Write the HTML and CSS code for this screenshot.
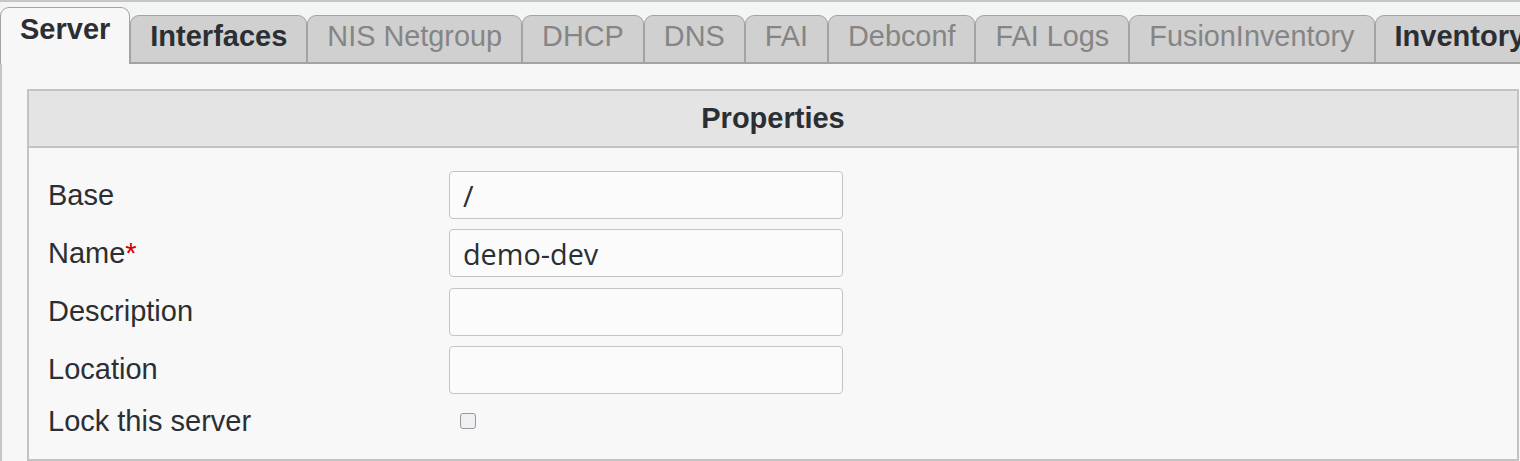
FILE: index.html
```html
<!DOCTYPE html>
<html lang="en">
<head>
<meta charset="utf-8">
<title>Server</title>
<link rel="stylesheet" href="styles.css">
</head>
<body>
<div class="tabbar">
  <div class="tab active">Server</div>
  <div class="tab enabled">Interfaces</div>
  <div class="tab">NIS Netgroup</div>
  <div class="tab">DHCP</div>
  <div class="tab">DNS</div>
  <div class="tab">FAI</div>
  <div class="tab">Debconf</div>
  <div class="tab">FAI Logs</div>
  <div class="tab">FusionInventory</div>
  <div class="tab enabled">Inventory</div>
</div>
<div class="content">
  <div class="panel">
    <div class="panel-head">Properties</div>
    <div class="panel-body">
      <label class="lbl">Base</label>
      <div class="field"><input class="txt" type="text" value="/"></div>
      <label class="lbl">Name<span class="req">*</span></label>
      <div class="field"><input class="txt" type="text" value="demo-dev"></div>
      <label class="lbl">Description</label>
      <div class="field"><input class="txt" type="text" value=""></div>
      <label class="lbl">Location</label>
      <div class="field"><input class="txt" type="text" value=""></div>
      <label class="lbl short">Lock this server</label>
      <div class="field short"><input class="cb" type="checkbox"></div>
    </div>
  </div>
</div>
</body>
</html>
```
FILE: styles.css
```css
html, body {
  margin: 0;
  padding: 0;
  background: #f7f7f7;
  font-family: "Liberation Sans", Arial, sans-serif;
  font-size: 29px;
  color: #2b2f33;
  overflow: hidden;
}

.tabbar {
  display: flex;
  align-items: flex-end;
  border-top: 2px solid #c6c6c6;
  background: #f3f4f4;
  padding-top: 5px;
  white-space: nowrap;
  overflow: hidden;
}

.tab {
  flex-shrink: 0;
  box-sizing: border-box;
  height: 49px;
  padding: 0 19px;
  line-height: 40px;
  font-size: 28.85px;
  border: 1px solid #a3a3a3;
  border-bottom: 2px solid #a3a3a3;
  border-radius: 9px 9px 0 0;
  background: #d0d0d0;
  color: #858585;
}

.tab.enabled {
  font-size: 29px;
  color: #2b2f33;
  font-weight: bold;
}

.tab.active {
  height: 57px;
  padding-top: 1px;
  font-size: 29px;
  border-bottom: none;
  background: #f7f7f7;
  color: #2b2f33;
  font-weight: bold;
}

.content {
  border-left: 2px solid #c6c6c6;
  padding: 25px 1px 0 25px;
  background: #f7f7f7;
}

.panel {
  border: 2px solid #c3c3c3;
  background: #f8f8f8;
}

.panel-head {
  height: 55px;
  line-height: 55px;
  text-align: center;
  font-weight: bold;
  background: #e4e4e4;
  border-bottom: 2px solid #c3c3c3;
}

.panel-body {
  display: grid;
  grid-template-columns: 401px 394px;
  grid-template-rows: 48px 48px 48px 48px 34px;
  row-gap: 10.3px;
  align-items: center;
  padding: 23px 19px 21px 19px;
}

.lbl {
  display: flex;
  align-items: center;
  height: 48px;
  white-space: nowrap;
}

.field {
  display: flex;
  align-items: center;
  height: 48px;
}

.lbl.short,
.field.short {
  height: 34px;
}

.req {
  color: #d20000;
}

.txt {
  box-sizing: border-box;
  width: 394px;
  height: 48px;
  margin: 0;
  padding: 0 13px;
  border: 1px solid #c4c4c4;
  border-radius: 4px;
  background: #fbfbfb;
  font-family: "Open Sans", "Noto Sans", sans-serif;
  font-size: 28.8px;
  color: #2b2f33;
  outline: none;
}

.cb {
  appearance: none;
  -webkit-appearance: none;
  box-sizing: border-box;
  width: 16px;
  height: 16px;
  margin: 0 0 0 11px;
  border: 1.5px solid #9a9a9a;
  border-radius: 3px;
  background: #eef0f3;
}
```
